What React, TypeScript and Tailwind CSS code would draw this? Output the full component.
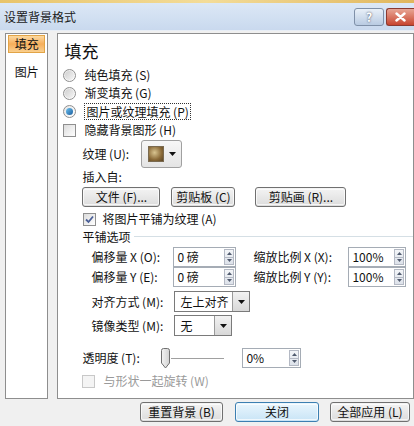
import React from "react";

const F = { fontFamily: '"Noto Sans CJK SC", "Noto Sans", sans-serif' };

function Radio({ checked }: { checked?: boolean }) {
  return (
    <span className="relative inline-flex h-[13px] w-[13px] items-center justify-center rounded-full border border-[#8f8f8f] bg-gradient-to-br from-[#e6e6e6] to-[#ffffff]">
      {checked ? (
        <span className="h-[7px] w-[7px] rounded-full bg-gradient-to-br from-[#6fc3f0] to-[#1a5e9e]" />
      ) : (
        <span className="h-[9px] w-[9px] rounded-full bg-gradient-to-br from-[#d0d0d0] to-[#f5f5f5]" />
      )}
    </span>
  );
}

function Check({ checked, disabled }: { checked?: boolean; disabled?: boolean }) {
  return (
    <span
      className={
        "inline-flex h-[13px] w-[13px] items-center justify-center border " +
        (disabled ? "border-[#c8c8c8] bg-[#f4f4f4]" : "border-[#8f8f8f] bg-gradient-to-br from-[#dcdcdc] to-[#ffffff]")
      }
    >
      {checked && (
        <svg width="9" height="9" viewBox="0 0 9 9">
          <path d="M1 4.5 L3.5 7 L8 1.5" stroke="#4a5f97" strokeWidth="1.8" fill="none" />
        </svg>
      )}
    </span>
  );
}

function Btn({ children, w, primary }: { children: React.ReactNode; w: string; primary?: boolean }) {
  return (
    <div
      className={
        "flex h-[20px] items-center justify-center rounded-[3px] border text-[12px] text-[#111] " +
        w +
        (primary
          ? " border-[#3c7fb1] bg-gradient-to-b from-[#eaf6fd] to-[#c8e4f6]"
          : " border-[#707070] bg-gradient-to-b from-[#f4f4f4] to-[#dcdcdc]")
      }
    >
      <span className="flex h-[16px] w-full items-center justify-center rounded-[2px] border border-white/70">{children}</span>
    </div>
  );
}

function Spin() {
  return (
    <div className="flex h-[16px] w-[10px] flex-col border border-[#b4b9c4] bg-gradient-to-b from-[#f3f5f8] to-[#dde2ea]">
      <div className="flex flex-1 items-center justify-center border-b border-[#b4b9c4]">
        <svg width="5" height="3" viewBox="0 0 5 3"><path d="M0 3 L2.5 0 L5 3Z" fill="#505a6e" /></svg>
      </div>
      <div className="flex flex-1 items-center justify-center">
        <svg width="5" height="3" viewBox="0 0 5 3"><path d="M0 0 L2.5 3 L5 0Z" fill="#505a6e" /></svg>
      </div>
    </div>
  );
}

function NumInput({ value, w }: { value: string; w: string }) {
  return (
    <div className={"flex h-[20px] items-center justify-between border border-[#a5acb5] bg-white pl-[3px] pr-[1px] text-[12px] " + w}>
      <span>{value}</span>
      <Spin />
    </div>
  );
}

function Arrow() {
  return (
    <svg width="7" height="4" viewBox="0 0 7 4"><path d="M0 0 L7 0 L3.5 4Z" fill="#111" /></svg>
  );
}

function Select({ value, w }: { value: string; w: string }) {
  return (
    <div className={"flex h-[21px] items-center justify-between border border-[#7a7a7a] bg-white text-[12px] " + w}>
      <span className="pl-[5px]">{value}</span>
      <span className="flex h-[19px] w-[17px] items-center justify-center border-l border-[#9a9a9a] bg-gradient-to-b from-[#f2f2f2] to-[#d8d8d8]">
        <Arrow />
      </span>
    </div>
  );
}

export default function App() {
  return (
    <div className="relative h-[426px] w-[414px] overflow-hidden bg-[#f0f0f0] text-[12px] text-[#111]" style={F}>
      <div className="h-[3px] bg-gradient-to-r from-[#e8c46a] via-[#f3dc98] to-[#e0b65c]" />
      <div className="flex h-[27px] items-center justify-between bg-gradient-to-b from-[#dce8f6] to-[#c9d9ee] pl-[4px]">
        <span className="text-[12px] text-[#1b1b1b]">设置背景格式</span>
        <div className="flex items-center gap-[2px]">
          <div className="flex h-[18px] w-[30px] items-center justify-center rounded-[3px] border border-[#7f90a8] bg-gradient-to-b from-[#e9f0f8] to-[#b9cbe2] text-[12px] font-bold text-white" style={{ textShadow: "0 0 2px #334" }}>
            ?
          </div>
          <div className="flex h-[18px] w-[28px] items-center justify-center rounded-l-[3px] border border-r-0 border-[#8b3a30] bg-gradient-to-b from-[#e7a595] to-[#c7432e]">
            <svg width="11" height="10" viewBox="0 0 11 10">
              <path d="M1.5 1.5 L9.5 8.5 M9.5 1.5 L1.5 8.5" stroke="#fff" strokeWidth="2.4" strokeLinecap="round" />
            </svg>
          </div>
        </div>
      </div>
      <div className="h-[3px] border-t border-[#e8eef6]" />
      <div className="flex gap-[9px] pl-[5px]">
        <div className="flex h-[366px] w-[45px] flex-col border border-[#8e8e8e] bg-white pt-[1px]">
          <div className="mx-[2px] flex h-[18px] items-center justify-center border border-[#e2a446] bg-gradient-to-b from-[#fcd9a0] via-[#f6ae5a] to-[#f9cf8e] text-[12px]">
            填充
          </div>
          <div className="mt-[10px] flex h-[18px] items-center justify-center text-[12px]">图片</div>
        </div>
        <div className="flex h-[366px] w-[370px] flex-col border border-[#8e8e8e] bg-white pl-[4px]">
          <div className="mt-[6px] flex h-[22px] items-center pl-[2px] text-[17px]">填充</div>
          <div className="mt-[4px] flex h-[18px] items-center gap-[8px] pl-[1px]">
            <Radio />
            <span>纯色填充 (S)</span>
          </div>
          <div className="flex h-[18px] items-center gap-[8px] pl-[1px]">
            <Radio />
            <span>渐变填充 (G)</span>
          </div>
          <div className="flex h-[19px] items-center gap-[8px] pl-[1px]">
            <Radio checked />
            <span className="border border-dotted border-[#333] px-[1px] leading-[15px]">图片或纹理填充 (P)</span>
          </div>
          <div className="flex h-[18px] items-center gap-[8px] pl-[1px]">
            <Check />
            <span>隐藏背景图形 (H)</span>
          </div>
          <div className="flex h-[29px] items-center pl-[20px]">
            <span className="w-[59px]">纹理 (U):</span>
            <div className="flex h-[28px] w-[41px] items-center justify-center gap-[5px] rounded-[3px] border border-[#a0a0a0] bg-gradient-to-b from-[#f7f7f7] to-[#e4e4e4]">
              <span className="h-[16px] w-[16px] border border-[#7a6a50] bg-[radial-gradient(circle_at_40%_40%,#d8c490,#8a6a38_60%,#5a4424)]" />
              <Arrow />
            </div>
          </div>
          <div className="flex h-[17px] items-center pl-[20px]">插入自:</div>
          <div className="mt-[2px] flex h-[20px] items-center pl-[20px]">
            <Btn w="w-[78px]">文件 (F)...</Btn>
            <div className="w-[11px]" />
            <Btn w="w-[64px]">剪贴板 (C)</Btn>
            <div className="w-[20px]" />
            <Btn w="w-[91px]">剪贴画 (R)...</Btn>
          </div>
          <div className="mt-[3px] flex h-[18px] items-center gap-[6px] pl-[21px]">
            <Check checked />
            <span>将图片平铺为纹理 (A)</span>
          </div>
          <div className="flex h-[17px] items-center gap-[4px] pl-[20px]">
            <span>平铺选项</span>
            <span className="h-px flex-1 bg-[#d5dfe5]" />
          </div>
          <div className="mt-[2px] flex h-[20px] items-center pl-[29px]">
            <span className="w-[82px]">偏移量 X (O):</span>
            <NumInput value="0 磅" w="w-[63px]" />
            <span className="ml-[17px] w-[95px]">缩放比例 X (X):</span>
            <NumInput value="100%" w="w-[58px]" />
          </div>
          <div className="flex h-[20px] items-center pl-[29px]">
            <span className="w-[82px]">偏移量 Y (E):</span>
            <NumInput value="0 磅" w="w-[63px]" />
            <span className="ml-[17px] w-[95px]">缩放比例 Y (Y):</span>
            <NumInput value="100%" w="w-[58px]" />
          </div>
          <div className="mt-[4px] flex h-[21px] items-center pl-[29px]">
            <span className="w-[83px]">对齐方式 (M):</span>
            <Select value="左上对齐" w="w-[76px]" />
          </div>
          <div className="mt-[3px] flex h-[21px] items-center pl-[29px]">
            <span className="w-[83px]">镜像类型 (M):</span>
            <Select value="无" w="w-[58px]" />
          </div>
          <div className="mt-[12px] flex h-[20px] items-center pl-[20px]">
            <span className="w-[78px]">透明度 (T):</span>
            <div className="flex items-center">
              <svg width="11" height="21" viewBox="0 0 11 21">
                <defs>
                  <linearGradient id="th" x1="0" x2="1">
                    <stop offset="0" stopColor="#f4f4f4" />
                    <stop offset="1" stopColor="#d2d2d2" />
                  </linearGradient>
                </defs>
                <path d="M1.5 2.5 Q1.5 0.5 3.5 0.5 L7.5 0.5 Q9.5 0.5 9.5 2.5 L9.5 15 L5.5 20 L1.5 15 Z" fill="url(#th)" stroke="#707070" />
              </svg>
              <span className="h-px w-[53px] bg-[#a0a0a0]" />
            </div>
            <div className="ml-[18px]">
              <NumInput value="0%" w="w-[59px]" />
            </div>
          </div>
          <div className="mt-[4px] flex h-[18px] items-center gap-[8px] pl-[20px] text-[#9a9a9a]">
            <Check disabled />
            <span>与形状一起旋转 (W)</span>
          </div>
        </div>
      </div>
      <div className="mt-[3px] flex h-[20px] items-center pl-[140px]">
        <Btn w="w-[83px]">重置背景 (B)</Btn>
        <div className="w-[12px]" />
        <Btn w="w-[84px]" primary>关闭</Btn>
        <div className="w-[11px]" />
        <Btn w="w-[80px]">全部应用 (L)</Btn>
      </div>
    </div>
  );
}
